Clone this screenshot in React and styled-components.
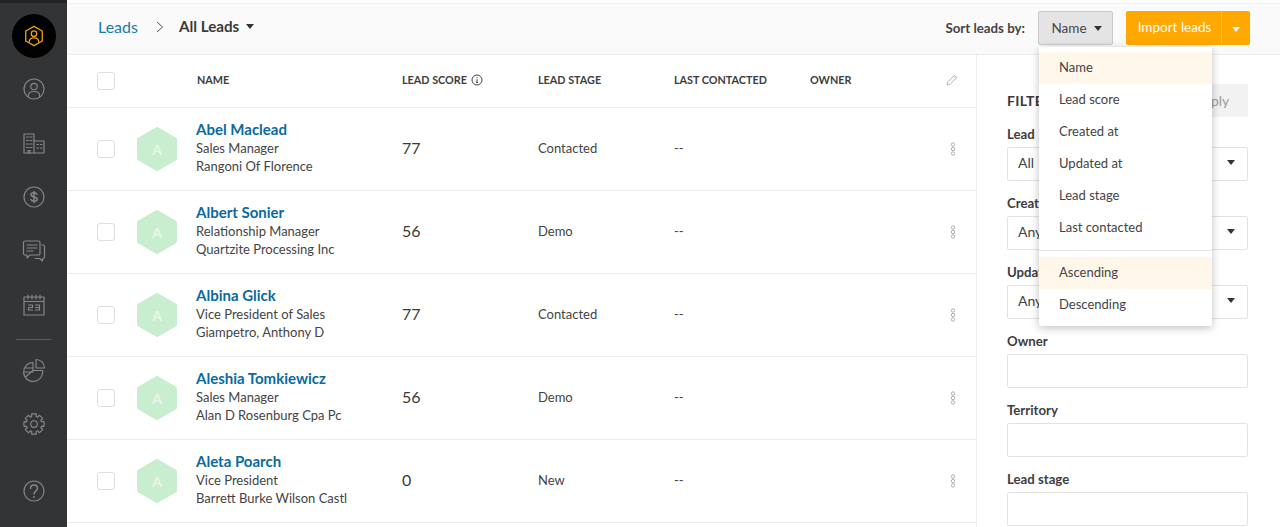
import React from "react";
import styled, { createGlobalStyle } from "styled-components";

const GlobalStyle = createGlobalStyle`
  html, body {
    margin: 0;
    height: 100%;
    overflow: hidden;
    background: #fff;
    font-family: "Lato", "Open Sans", sans-serif;
    color: #333;
  }
  * { box-sizing: border-box; }
`;

const leads = [
  { name: "Abel Maclead", title: "Sales Manager", company: "Rangoni Of Florence", score: 77, stage: "Contacted" },
  { name: "Albert Sonier", title: "Relationship Manager", company: "Quartzite Processing Inc", score: 56, stage: "Demo" },
  { name: "Albina Glick", title: "Vice President of Sales", company: "Giampetro, Anthony D", score: 77, stage: "Contacted" },
  { name: "Aleshia Tomkiewicz", title: "Sales Manager", company: "Alan D Rosenburg Cpa Pc", score: 56, stage: "Demo" },
  { name: "Aleta Poarch", title: "Vice President", company: "Barrett Burke Wilson Castl", score: 0, stage: "New" },
];

const sortFields = ["Name", "Lead score", "Created at", "Updated at", "Lead stage", "Last contacted"];
const sortOrders = ["Ascending", "Descending"];

const Page = styled.div`
  display: flex;
  width: 1280px;
  height: 527px;
  overflow: hidden;
  position: relative;
`;

const Sidebar = styled.nav`
  width: 67px;
  flex: none;
  background: #333436;
  border-top: 3px solid #242424;
  display: flex;
  flex-direction: column;
  align-items: center;
  color: #87888a;
`;

const Logo = styled.div`
  width: 44px;
  height: 44px;
  margin-top: 11px;
  margin-bottom: 4px;
  border-radius: 50%;
  background: #020202;
  display: flex;
  align-items: center;
  justify-content: center;
  color: #f0a30a;
`;

const NavItem = styled.div`
  height: 54px;
  width: 100%;
  display: flex;
  align-items: center;
  justify-content: center;
`;

const NavRule = styled.div`
  width: 35px;
  height: 1px;
  background: #5c5d5f;
  margin: 7px 0 3px;
`;

const HelpItem = styled(NavItem)`
  margin-top: 13px;
`;

const Main = styled.div`
  flex: 1;
  min-width: 0;
  padding-top: 3px;
  display: flex;
  flex-direction: column;
`;

const Header = styled.header`
  height: 52px;
  flex: none;
  background: #fafafa;
  border-top: 1px solid #f0f0f0;
  border-bottom: 1px solid #ececec;
  display: flex;
  align-items: center;
  padding: 0 30px 2px 31px;
`;

const Breadcrumb = styled.div`
  display: flex;
  align-items: center;
  padding-bottom: 4px;
`;

const Crumb = styled.a`
  font-size: 16px;
  color: #1a7aa8;
`;

const Chevron = styled.svg`
  margin: 2px 15px 0 18px;
`;

const ViewName = styled.span`
  font-size: 15.2px;
  font-weight: 700;
  color: #3a3a3a;
  display: flex;
  align-items: center;
  gap: 7px;
`;

const Caret = styled.span`
  width: 0;
  height: 0;
  border-left: 4.5px solid transparent;
  border-right: 4.5px solid transparent;
  border-top: 5px solid ${(p) => p.$color || "#333"};
  display: inline-block;
`;

const HeaderRight = styled.div`
  margin-left: auto;
  display: flex;
  align-items: center;
`;

const SortLabel = styled.span`
  font-size: 13.3px;
  font-weight: 700;
  color: #444;
  margin-right: 13px;
`;

const SortButton = styled.div`
  width: 75px;
  height: 34px;
  background: #e4e4e4;
  border: 1px solid #c9c9c9;
  border-radius: 2px;
  font-size: 13.5px;
  color: #444;
  display: flex;
  align-items: center;
  justify-content: center;
  gap: 7px;
  padding-left: 2px;
  margin-right: 13px;
`;

const ImportGroup = styled.div`
  height: 34px;
  width: 124px;
  background: #ffa800;
  border-radius: 2px;
  display: flex;
  color: #fff;
`;

const ImportLabel = styled.div`
  width: 96px;
  font-size: 13.5px;
  display: flex;
  align-items: center;
  justify-content: center;
  border-right: 1px solid #ffc04d;
  padding: 0 0 2px 2px;
`;

const ImportCaret = styled.div`
  flex: 1;
  display: flex;
  align-items: center;
  justify-content: center;
  padding-top: 3px;
`;

const Body = styled.div`
  flex: 1;
  display: flex;
  min-height: 0;
`;

const Table = styled.section`
  width: 910px;
  flex: none;
  border-right: 1px solid #ececec;
`;

const Grid = styled.div`
  display: grid;
  grid-template-columns: 40px 59px 206px 136px 136px 136px 1fr 24px;
  align-items: center;
  padding: 0 11px 0 30px;
  border-bottom: 1px solid #ececec;
`;

const HeadRow = styled(Grid)`
  height: 53px;
  font-size: 10.8px;
  font-weight: 700;
  color: #3d3d3d;
  background: #fff;
`;

const Row = styled(Grid)`
  height: 83px;
`;

const Check = styled.span`
  width: 18px;
  height: 18px;
  border: 1px solid #dedede;
  border-radius: 3px;
  background: #fff;
  display: block;
`;

const HeadCell = styled.span`
  display: flex;
  align-items: center;
  gap: 4px;
  padding-bottom: 3px;
  margin-left: ${(p) => p.$inset || 0}px;
`;

const Avatar = styled.div`
  width: 42px;
  height: 44px;
  position: relative;
  display: flex;
  align-items: center;
  justify-content: center;
  color: #e6f7e9;
  font-size: 14px;
  font-weight: 700;
  margin-left: -1px;
`;

const AvatarShape = styled.svg`
  position: absolute;
  inset: 0;
`;

const AvatarLetter = styled.span`
  position: relative;
`;

const Person = styled.div`
  display: flex;
  flex-direction: column;
  white-space: nowrap;
  padding-bottom: 3px;
`;

const PersonName = styled.a`
  font-size: 15px;
  font-weight: 700;
  line-height: 19px;
  color: #0b6a9e;
`;

const PersonLine = styled.span`
  font-size: 13px;
  line-height: 18px;
  color: #444;
`;

const Score = styled.span`
  font-size: 16px;
  color: #3a3a3a;
  padding-bottom: 4px;
`;

const Cell = styled.span`
  font-size: 13px;
  color: #444;
  padding-bottom: 2px;
`;

const RowMenu = styled.svg`
  display: block;
  margin: 0 auto;
`;

const PencilSlot = styled.svg`
  display: block;
  margin-left: 5px;
  margin-bottom: 3px;
`;

const Filters = styled.aside`
  flex: 1;
  padding: 29px 32px 0 30px;
`;

const FilterHead = styled.div`
  display: flex;
  align-items: center;
  justify-content: space-between;
  height: 33px;
  margin-bottom: 9px;
`;

const FilterTitle = styled.span`
  font-size: 14px;
  font-weight: 700;
  color: #3a3a3a;
  letter-spacing: 0.3px;
`;

const ApplyButton = styled.span`
  width: 73px;
  height: 33px;
  border-radius: 2px;
  background: #f2f2f2;
  color: #9b9b9b;
  font-size: 14px;
  display: flex;
  align-items: center;
  justify-content: center;
`;

const FilterLabel = styled.label`
  display: block;
  font-size: 13.2px;
  font-weight: 700;
  line-height: 17px;
  word-spacing: ${(p) => p.$wordGap || 0}px;
  color: #3d3d3d;
  margin-bottom: 4px;
`;

const Field = styled.div`
  height: 34px;
  border: 1px solid #e3e3e3;
  border-radius: 2px;
  background: #fff;
  display: flex;
  align-items: center;
  justify-content: space-between;
  padding: 0 12px 3px 10px;
  font-size: 14px;
  color: #444;
  margin-bottom: 14px;
`;

const Menu = styled.div`
  position: absolute;
  left: 1039px;
  top: 47px;
  width: 173px;
  height: 279px;
  background: #fff;
  box-shadow: 0 2px 8px rgba(0, 0, 0, 0.25);
  padding-top: 5px;
  border-radius: 0 0 2px 2px;
`;

const MenuItem = styled.div`
  height: 32px;
  display: flex;
  align-items: center;
  padding: 0 0 3px 20px;
  font-size: 13px;
  color: #444;
  background: ${(p) => (p.$active ? "#fff7ea" : "transparent")};
`;

const MenuRule = styled.div`
  height: 1px;
  background: #e4e4e4;
  margin: 6px 0 6px;
`;

const Icon = ({ children, size = 24 }) => (
  <svg width={size} height={size} viewBox="0 0 24 24" fill="none" stroke="currentColor" strokeWidth="1.15" strokeLinecap="round" strokeLinejoin="round">
    {children}
  </svg>
);

// 8 tooth gear outline, easier to compute than to write out by hand
const gearPath = (() => {
  const pts = [];
  for (let i = 0; i < 8; i++) {
    const a = (i * Math.PI) / 4 - Math.PI / 2;
    [[-0.24, 10.2], [-0.15, 10.2], [0.15, 10.2], [0.24, 10.2], [0.28, 7.8], [0.5, 7.8]].forEach(([d, r]) => {
      const t = a + d;
      pts.push(`${(12 + r * Math.cos(t)).toFixed(2)} ${(12 + r * Math.sin(t)).toFixed(2)}`);
    });
  }
  return `M${pts.join("L")}Z`;
})();

const LogoIcon = () => (
  <Icon size={22}>
    <path d="M12 1.5 21 6.5V17.5L12 22.5 3 17.5V6.5Z" strokeWidth="1.4" />
    <circle cx="12" cy="9.5" r="3" strokeWidth="1.4" />
    <path d="M6.8 18.5c0-3 2.2-4.5 5.2-4.5s5.2 1.5 5.2 4.5" strokeWidth="1.4" />
  </Icon>
);

const ContactIcon = () => (
  <Icon>
    <circle cx="12" cy="12" r="10" />
    <circle cx="12" cy="9.5" r="3.2" />
    <path d="M6.5 19.5V18c0-2 2-3.500 5.500-3.500s5.500 1.500 5.500 3.500v1.500" />
  </Icon>
);

const BuildingIcon = () => (
  <Icon>
    <path d="M2 22V3h10v19M12 10h10v12H2" />
    <path d="M4.500 6h2M8 6h2M4.500 9.500h2M8 9.500h2M4.500 13h2M8 13h2M4.500 16.500h2M8 16.500h2M6 22v-2.500h2V22M15 13.500h1.500M18.500 13.500H20M15 17h1.500M18.500 17H20" />
  </Icon>
);

const DollarIcon = () => (
  <Icon>
    <circle cx="12" cy="12" r="10" />
    <path d="M15 9.200c-.4-.9-1.500-1.400-3-1.400-1.800 0-3 .8-3 2 0 3.100 6.200 1.400 6.200 4.400 0 1.300-1.300 2-3.200 2-1.600 0-2.800-.5-3.200-1.600M12 6.500v11" strokeWidth="1.5" />
  </Icon>
);

const ChatIcon = () => (
  <Icon>
    <path d="M3 2h13.500A1.500 1.500 0 0 1 18 3.500v11a1.500 1.500 0 0 1-1.500 1.500H8l-3 3v-3H3a1.500 1.500 0 0 1-1.500-1.500v-11A1.500 1.500 0 0 1 3 2Z" />
    <path d="M5 6h10M5 9h10M5 12h6M20 6h1a1.500 1.500 0 0 1 1.500 1.500V18a1.500 1.500 0 0 1-1.500 1.500h-.5V22l-3-2.500h-4.500" />
  </Icon>
);

const CalendarIcon = () => (
  <Icon>
    <path d="M2 4h20v18H2ZM2 8.500h20M6 2v4M10 2v4M14 2v4M18 2v4" />
    <path d="M6.500 12h4v2.500h-4V17h4M13.500 12h4v5h-4M13.500 14.500h4" />
  </Icon>
);

const ReportIcon = () => (
  <Icon>
    <path d="M14 1.500c4.500 0 8.500 3.500 8.500 8.500H14Z" />
    <path d="M11 4.500a9.500 9.500 0 1 0 9.500 8H11ZM2 10h9M1.800 14h9.200M11 12.500 4 18.500" />
  </Icon>
);

const GearIcon = () => (
  <Icon>
    <circle cx="12" cy="12" r="3.3" />
    <path d={gearPath} />
  </Icon>
);

const HelpIcon = () => (
  <Icon>
    <circle cx="12" cy="12" r="10" />
    <path d="M8.500 9.500c0-2 1.500-3.500 3.500-3.500s3.500 1.400 3.500 3.300c0 2.700-3.500 2.900-3.500 5.700" strokeWidth="1.4" />
    <circle cx="12" cy="18" r=".4" />
  </Icon>
);

const InfoIcon = () => (
  <svg width="12" height="12" viewBox="0 0 12 12" fill="none" stroke="#444" strokeWidth="1">
    <circle cx="6" cy="6" r="5" />
    <path d="M6 5.200v3.200M5 8.500h2M6 3.200v1" />
  </svg>
);

const PencilIcon = () => (
  <PencilSlot width="12" height="12" viewBox="0 0 12 12" fill="none" stroke="#b5b5b5" strokeWidth="1" strokeLinejoin="round">
    <path d="M1 11l.7-3L8.500 1.200l2.300 2.300L4 10.300ZM7.500 2.200l2.300 2.300" />
  </PencilSlot>
);

const DotsIcon = () => (
  <RowMenu width="6" height="14" viewBox="0 0 6 14" fill="none" stroke="#b0b0b0" strokeWidth="1">
    <circle cx="3" cy="2.500" r="1.700" />
    <circle cx="3" cy="7" r="1.700" />
    <circle cx="3" cy="11.500" r="1.700" />
  </RowMenu>
);

const Hexagon = () => (
  <AvatarShape width="42" height="44" viewBox="0 0 42 44">
    <path d="M21 2 39 12.500V31.500L21 42 3 31.500V12.500Z" fill="#c9eecf" stroke="#c9eecf" strokeWidth="4" strokeLinejoin="round" />
  </AvatarShape>
);

const App = () => {
  return (
    <Page>
      <GlobalStyle />
      <Sidebar>
        <Logo><LogoIcon /></Logo>
        <NavItem><ContactIcon /></NavItem>
        <NavItem><BuildingIcon /></NavItem>
        <NavItem><DollarIcon /></NavItem>
        <NavItem><ChatIcon /></NavItem>
        <NavItem><CalendarIcon /></NavItem>
        <NavRule />
        <NavItem><ReportIcon /></NavItem>
        <NavItem><GearIcon /></NavItem>
        <HelpItem><HelpIcon /></HelpItem>
      </Sidebar>
      <Main>
        <Header>
          <Breadcrumb>
            <Crumb>Leads</Crumb>
            <Chevron width="8" height="12" viewBox="0 0 8 12" fill="none" stroke="#555" strokeWidth="1">
              <path d="M1 1l5.500 5L1 11" />
            </Chevron>
            <ViewName>All Leads <Caret /></ViewName>
          </Breadcrumb>
          <HeaderRight>
            <SortLabel>Sort leads by:</SortLabel>
            <SortButton>Name <Caret /></SortButton>
            <ImportGroup>
              <ImportLabel>Import leads</ImportLabel>
              <ImportCaret><Caret $color="#fff" /></ImportCaret>
            </ImportGroup>
          </HeaderRight>
        </Header>
        <Body>
          <Table>
            <HeadRow>
              <Check />
              <span />
              <HeadCell $inset={1}>NAME</HeadCell>
              <HeadCell>LEAD SCORE <InfoIcon /></HeadCell>
              <HeadCell>LEAD STAGE</HeadCell>
              <HeadCell>LAST CONTACTED</HeadCell>
              <HeadCell>OWNER</HeadCell>
              <PencilIcon />
            </HeadRow>
            {leads.map((lead) => (
              <Row key={lead.name}>
                <Check />
                <Avatar>
                  <Hexagon />
                  <AvatarLetter>A</AvatarLetter>
                </Avatar>
                <Person>
                  <PersonName>{lead.name}</PersonName>
                  <PersonLine>{lead.title}</PersonLine>
                  <PersonLine>{lead.company}</PersonLine>
                </Person>
                <Score>{lead.score}</Score>
                <Cell>{lead.stage}</Cell>
                <Cell>--</Cell>
                <span />
                <DotsIcon />
              </Row>
            ))}
          </Table>
          <Filters>
            <FilterHead>
              <FilterTitle>FILTERS</FilterTitle>
              <ApplyButton>Apply</ApplyButton>
            </FilterHead>
            <FilterLabel $wordGap={4}>Lead view</FilterLabel>
            <Field>All <Caret /></Field>
            <FilterLabel>Created at</FilterLabel>
            <Field>Any time <Caret /></Field>
            <FilterLabel>Updated at</FilterLabel>
            <Field>Any time <Caret /></Field>
            <FilterLabel>Owner</FilterLabel>
            <Field />
            <FilterLabel>Territory</FilterLabel>
            <Field />
            <FilterLabel>Lead stage</FilterLabel>
            <Field />
          </Filters>
        </Body>
      </Main>
      <Menu>
        {sortFields.map((field) => (
          <MenuItem key={field} $active={field === "Name"}>{field}</MenuItem>
        ))}
        <MenuRule />
        {sortOrders.map((order) => (
          <MenuItem key={order} $active={order === "Ascending"}>{order}</MenuItem>
        ))}
      </Menu>
    </Page>
  );
};

export default App;
